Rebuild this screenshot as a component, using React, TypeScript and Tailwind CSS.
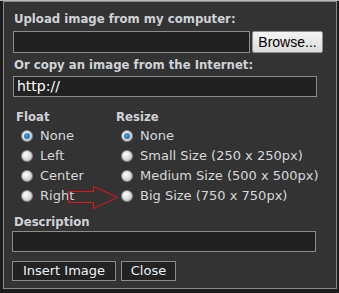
const Radio = ({ checked }: { checked?: boolean }) => (
  <span className="relative inline-flex h-[12px] w-[12px] shrink-0 items-center justify-center rounded-full border border-[#8a8a8a] bg-[radial-gradient(circle_at_40%_35%,#ffffff,#d8d8d8_55%,#a8a8a8)]">
    {checked && <span className="h-[6px] w-[6px] rounded-full bg-[radial-gradient(circle_at_40%_35%,#4aa3e0,#0b5e9e)]" />}
  </span>
);

const Option = ({ label, checked }: { label: string; checked?: boolean }) => (
  <div className="flex h-[20px] items-center gap-[7px] pl-[5px]">
    <Radio checked={checked} />
    <span>{label}</span>
  </div>
);

export default function App() {
  const label =
    "h-[18px] leading-[18px] font-bold text-[13px] text-[#cfd2d6] font-['DejaVu_Sans_Condensed','DejaVu_Sans',sans-serif]";
  const field = "h-[21px] border border-[#8c8c8c] bg-[#212121] text-white text-[14px] leading-[19px] px-[3px] outline-none";

  return (
    <div
      className="relative h-[293px] w-[339px] overflow-hidden bg-[#1c1c1c] pt-[1px]"
      style={{ fontFamily: "'DejaVu Sans', Verdana, sans-serif" }}
    >
      <div className="absolute left-0 top-0 h-[1px] w-full bg-[#b8b8b8]" />
      <div className="ml-[3px] h-[288px] w-[334px] border border-[#8a8a8a] bg-[#333333] pl-[9px] pt-[8px]">
        <div className={`${label} pl-[1px]`}>Upload image from my computer:</div>
        <div className="mt-[3px] flex items-center">
          <div className={`${field} h-[22px] w-[237px]`} />
          <button
            className="ml-[2px] h-[22px] w-[71px] rounded-[2px] border border-[#8f8f8f] bg-[linear-gradient(#f4f4f4,#dcdcdc)] text-[14px] text-black"
            style={{ fontFamily: "'Liberation Sans', Arial, sans-serif" }}
          >
            Browse...
          </button>
        </div>
        <div className={`${label} mt-[3px] pl-[1px]`}>Or copy an image from the Internet:</div>
        <div className={`${field} mt-[2px] w-[304px]`}>http://</div>

        <div className="mt-[11px] flex pl-[3px] text-[13px] text-[#d6d8dc]">
          <div className="w-[100px]">
            <div className={label}>Float</div>
            <Option label="None" checked />
            <Option label="Left" />
            <Option label="Center" />
            <Option label="Right" />
          </div>
          <div>
            <div className={label}>Resize</div>
            <Option label="None" checked />
            <Option label="Small Size (250 x 250px)" />
            <Option label="Medium Size (500 x 500px)" />
            <Option label="Big Size (750 x 750px)" />
          </div>
        </div>

        <div className={`${label} mt-[7px] pl-[1px]`}>Description</div>
        <div className={`${field} -ml-[1px] h-[20px] w-[304px]`} />
        <div className="-ml-[1px] mt-[9px] flex gap-[5px]">
          <button className="h-[20px] w-[104px] border border-[#8c8c8c] bg-[#222222] text-[13px] leading-[18px] text-[#eef2f6]">
            Insert Image
          </button>
          <button className="h-[20px] w-[55px] border border-[#8c8c8c] bg-[#222222] text-[13px] leading-[18px] text-[#eef2f6]">
            Close
          </button>
        </div>
      </div>

      <svg className="pointer-events-none absolute left-0 top-0" width="339" height="293">
        <polygon
          points="68.5,191.5 93.5,191.5 93.5,186.5 117.5,197.5 93.5,208.5 93.5,202.5 68.5,202.5"
          fill="none"
          stroke="#e8141a"
          strokeWidth="1"
        />
      </svg>
    </div>
  );
}
